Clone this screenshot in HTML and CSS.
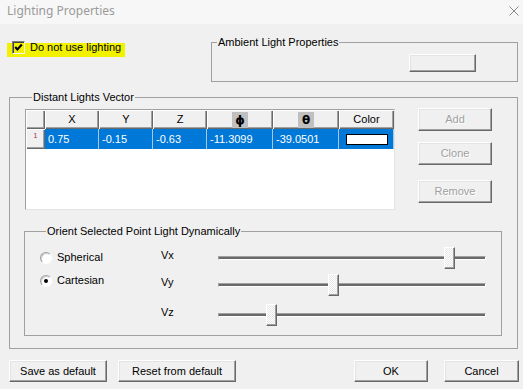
FILE: index.html
```html
<!DOCTYPE html>
<html>
<head>
<meta charset="utf-8">
<title>Lighting Properties</title>
<link rel="stylesheet" href="styles.css">
</head>
<body>
<div class="titlebar">
  <span class="title">Lighting Properties</span>
  <svg class="close" width="10" height="10" viewBox="0 0 10 10"><path d="M0.5 0.5L9.5 9.5M9.5 0.5L0.5 9.5" stroke="#8c8c8c" stroke-width="1" fill="none"/></svg>
</div>
<div class="main">
  <div class="toprow">
    <label class="hl">
      <span class="cb"><svg width="9" height="9" viewBox="0 0 9 9"><polyline points="1.2,4 3.4,6.4 7.8,1.6" fill="none" stroke="#000" stroke-width="2.2"/></svg></span>
      <span class="cb-label">Do not use lighting</span>
    </label>
    <fieldset class="group ambient">
      <legend>Ambient Light Properties</legend>
      <div class="ambient-body"><button class="btn swatch-btn"></button></div>
    </fieldset>
  </div>

  <fieldset class="group distant">
    <legend>Distant Lights Vector</legend>
    <div class="grid-row">
      <div class="grid">
        <div class="hdr"></div>
        <div class="hdr">X</div>
        <div class="hdr">Y</div>
        <div class="hdr">Z</div>
        <div class="hdr"><span class="sym">ϕ</span></div>
        <div class="hdr"><span class="sym">θ</span></div>
        <div class="hdr">Color</div>
        <div class="hdr rowhdr">1</div>
        <div class="cell">0.75</div>
        <div class="cell">-0.15</div>
        <div class="cell">-0.63</div>
        <div class="cell">-11.3099</div>
        <div class="cell">-39.0501</div>
        <div class="cell colorcell"><span class="swatchbox"></span></div>
        <div class="blank"></div>
      </div>
      <div class="side">
        <button class="btn add" disabled>Add</button>
        <button class="btn clone" disabled>Clone</button>
        <button class="btn remove" disabled>Remove</button>
      </div>
    </div>

    <fieldset class="group orient">
      <legend>Orient Selected Point Light Dynamically</legend>
      <div class="orient-body">
        <div class="radios">
          <label class="radio-item"><span class="radio"></span>Spherical</label>
          <label class="radio-item"><span class="radio on"></span>Cartesian</label>
        </div>
        <div class="sliders">
          <div class="srow"><span class="slabel">Vx</span><div class="slider"><div class="track"></div><div class="thumb" style="left:226px"></div></div></div>
          <div class="srow vy"><span class="slabel">Vy</span><div class="slider"><div class="track"></div><div class="thumb" style="left:110px"></div></div></div>
          <div class="srow vz"><span class="slabel">Vz</span><div class="slider"><div class="track"></div><div class="thumb" style="left:48px"></div></div></div>
        </div>
      </div>
    </fieldset>
  </fieldset>

  <div class="bottom">
    <button class="btn save">Save as default</button>
    <button class="btn reset">Reset from default</button>
    <button class="btn ok">OK</button>
    <button class="btn cancel">Cancel</button>
  </div>
</div>
</body>
</html>
```
FILE: styles.css
```css
* { box-sizing: border-box; }
html, body { margin: 0; padding: 0; }
body {
  background: #f0f0f0;
  font-family: "Liberation Sans", Arial, sans-serif;
  font-size: 11px;
  line-height: 13px;
  color: #000;
  width: 523px;
  height: 389px;
  overflow: hidden;
}

.btn {
  font: inherit;
  padding: 0;
  margin: 0;
  color: #000;
  background: #f0f0f0;
  border: 1px solid;
  border-color: #fff #696969 #696969 #fff;
  box-shadow: inset -1px -1px 0 #a0a0a0, inset 1px 1px 0 #e3e3e3;
  text-align: center;
}
.btn:disabled {
  color: #a0a0a0;
  text-shadow: 1px 1px 0 #fff;
}

.titlebar {
  height: 24px;
  display: flex;
  align-items: center;
  justify-content: space-between;
  padding: 0 4px 3px 7px;
  background: #f7f7f7;
}
.title {
  font-family: "Noto Sans", sans-serif;
  font-size: 12px;
  line-height: 16px;
  color: #9a9a9a;
}
.close { display: block; }

.main { padding: 0 5px 0 9px; }

.toprow { display: flex; align-items: flex-start; }
.hl {
  display: flex;
  align-items: flex-start;
  height: 14px;
  margin: 19px 0 0 -2px;
  padding: 0 4px 0 5px;
  background: #f2f200;
}
.cb {
  width: 13px;
  height: 13px;
  margin: -2px 5px 0 0;
  border: 1px solid;
  border-color: #808080 #f8f8f8 #f8f8f8 #808080;
  box-shadow: inset 1px 1px 0 #404040;
  background: #f2f200;
  display: flex;
  align-items: center;
  justify-content: center;
}
.cb svg { display: block; }
.cb-label { margin-top: -2px; line-height: 13px; }

.group {
  margin: 0;
  padding: 0;
  min-width: 0;
  border: 1px solid #a0a0a0;
}
.group > legend { padding: 0 1px; line-height: 13px; }

.ambient { width: 307px; margin: 12px 0 0 auto; }
.ambient > legend { margin-left: 5px; }
.ambient-body { padding: 5px 0 7px 197px; }
.swatch-btn { width: 67px; height: 18px; }

.distant { margin-top: 9px; padding: 5px 0 12px 15px; }
.distant > legend { margin-left: 7px; }

.grid-row { display: flex; align-items: flex-start; }
.grid {
  display: grid;
  grid-template-columns: 19px 54px 54px 54px 66px 66px 55px;
  grid-template-rows: 19px 20px 60px;
  width: 370px;
  height: 101px;
  border: 1px solid;
  border-color: #a0a0a0 #e3e3e3 #e3e3e3 #a0a0a0;
  background: #fff;
}
.hdr {
  display: flex;
  align-items: center;
  justify-content: center;
  background: #f0f0f0;
  box-shadow: inset 1px 1px 0 #fff, inset -1px -1px 0 #696969, inset -2px -2px 0 #a0a0a0;
}
.sym {
  display: block;
  width: 16px;
  height: 16px;
  background: #c0c0c0;
  font-family: "DejaVu Sans", sans-serif;
  font-weight: bold;
  font-size: 12px;
  line-height: 16px;
  text-align: center;
}
.rowhdr {
  align-items: flex-start;
  font-size: 7px;
  line-height: 14px;
  color: #a0283c;
}
.cell {
  background: #0078d7;
  color: #fff;
  padding-left: 3px;
  line-height: 20px;
  box-shadow: inset -1px 0 0 #a9c6e4;
}
.colorcell {
  display: flex;
  align-items: center;
  justify-content: center;
  padding: 0;
}
.swatchbox {
  width: 42px;
  height: 11px;
  border: 1px solid #000;
  background: #fff;
}
.blank { grid-column: 1 / -1; }

.side { display: flex; flex-direction: column; width: 74px; margin-left: 23px; }
.side .btn { height: 23px; }
.side .add { margin-top: -1px; }
.side .clone { margin-top: 11px; }
.side .remove { margin-top: 15px; }

.orient { width: 478px; margin: 15px 0 0 -1px; padding: 0 0 9px 15px; }
.orient > legend { margin-left: 6px; }
.orient-body { display: flex; align-items: flex-start; }
.radios { width: 121px; padding-top: 13px; }
.radio-item { display: flex; align-items: center; height: 13px; gap: 5px; }
.radio-item + .radio-item { margin-top: 10px; }
.radio {
  position: relative;
  width: 12px;
  height: 12px;
  border-radius: 50%;
  border: 1px solid;
  border-color: #a0a0a0 #fff #fff #a0a0a0;
  box-shadow: inset 1px 1px 0 #d0d0d0;
  background: #fff;
}
.radio.on::after {
  content: "";
  position: absolute;
  left: 3px;
  top: 3px;
  width: 4px;
  height: 4px;
  border-radius: 50%;
  background: #000;
}

.sliders { padding-top: 9px; }
.srow { display: flex; align-items: flex-start; height: 22px; }
.srow.vy { margin-top: 5px; }
.srow.vz { margin-top: 8px; }
.slabel { width: 57px; margin-top: 2px; }
.slider { position: relative; width: 268px; height: 22px; }
.track {
  margin-top: 9px;
  height: 4px;
  border: 1px solid;
  border-color: #a0a0a0 #fff #fff #a0a0a0;
  background: #696969;
}
.thumb {
  position: absolute;
  top: 0;
  width: 11px;
  height: 22px;
  border: 1px solid;
  border-color: #fff #696969 #696969 #fff;
  box-shadow: inset -1px -1px 0 #a0a0a0;
  background: repeating-conic-gradient(#ffffff 0 25%, #e6e6e6 0 50%) 0 0 / 2px 2px;
}

.bottom { display: flex; margin: 11px -1px 0 0; }
.bottom .btn { height: 22px; }
.bottom .save { width: 98px; }
.bottom .reset { width: 118px; margin-left: 11px; }
.bottom .ok { width: 74px; margin-left: auto; }
.bottom .cancel { width: 75px; margin-left: 16px; }
```
